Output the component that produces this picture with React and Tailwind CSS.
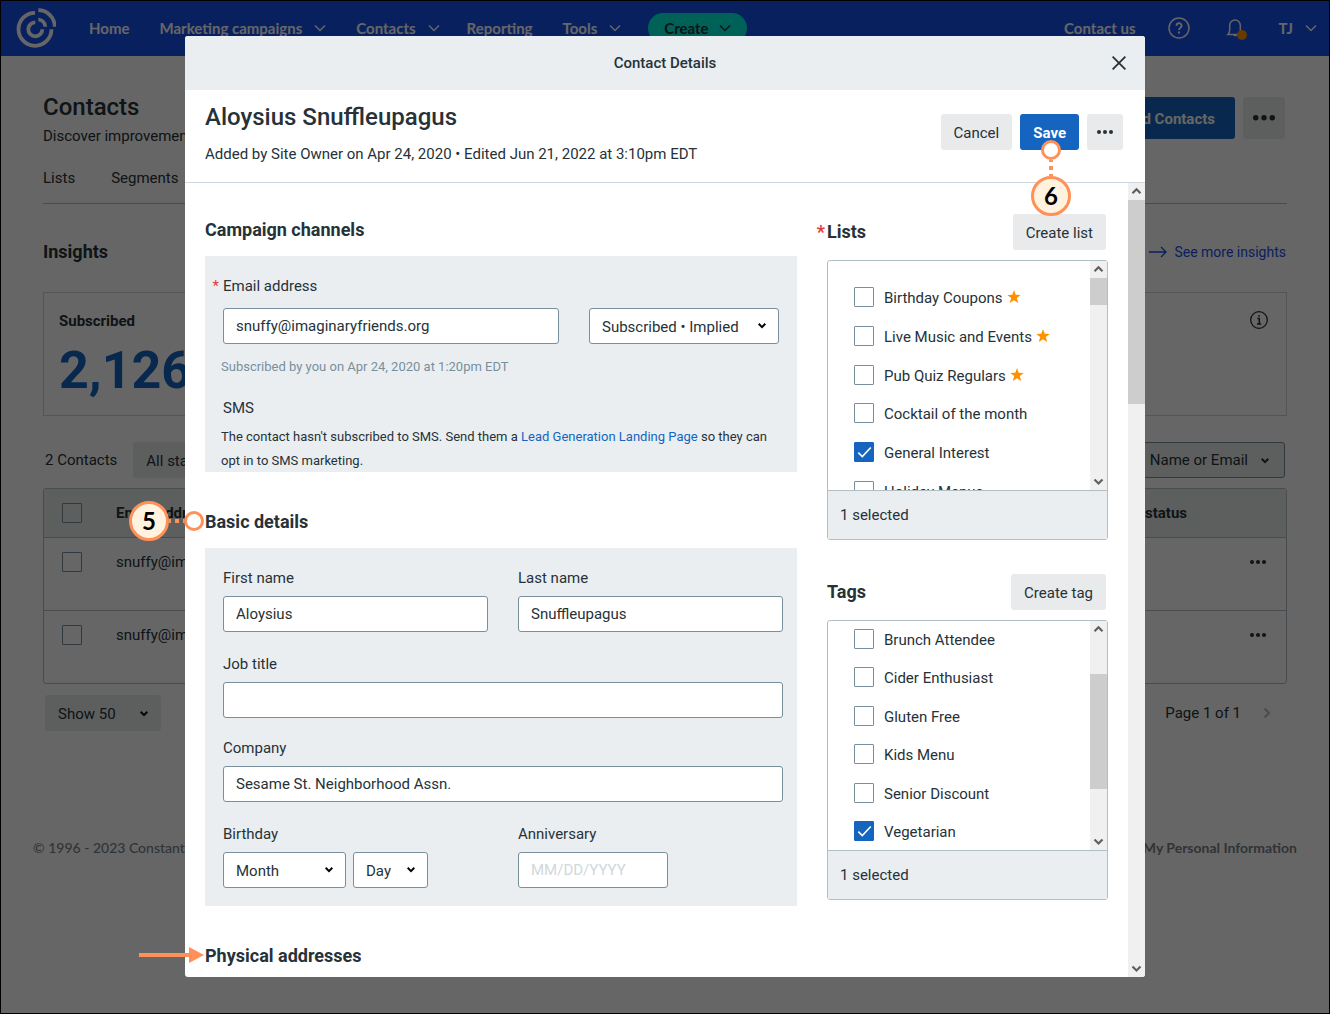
import React, { useState } from 'react';
import { clsx } from 'clsx';

const LISTS = [
  { name: 'Birthday Coupons', starred: true },
  { name: 'Live Music and Events', starred: true },
  { name: 'Pub Quiz Regulars', starred: true },
  { name: 'Cocktail of the month' },
  { name: 'General Interest' },
  { name: 'Holiday Menus' },
];

const TAGS = [
  { name: 'Brunch Attendee' },
  { name: 'Cider Enthusiast' },
  { name: 'Gluten Free' },
  { name: 'Kids Menu' },
  { name: 'Senior Discount' },
  { name: 'Vegetarian' },
];

const ROWS = [1, 2];

const Logo = () => (
  <svg className="h-10 w-10" viewBox="0 0 40 40" fill="none" stroke="currentColor" strokeWidth="3.8">
    <path d="M19 4.8A16.5 16.5 0 1 0 35.5 21.3" />
    <path d="M22.3 2.2A16.5 16.5 0 0 1 38.8 18.7" />
    <path d="M19.3 14.3A7 7 0 1 0 26.3 21.3" />
    <path d="M22.3 11.7A7 7 0 0 1 29.3 18.7" />
  </svg>
);

const NavChevron = () => (
  <svg className="h-3 w-3" viewBox="0 0 12 12" fill="none" stroke="currentColor" strokeWidth="1.5">
    <path d="M1 3.5l5 5 5-5" />
  </svg>
);

const Caret = ({ className }) => (
  <svg className={clsx('h-2 w-2', className)} viewBox="0 0 8 8" fill="none" stroke="currentColor" strokeWidth="2">
    <path d="M0.7 1.8L4 5.1l3.3-3.3" />
  </svg>
);

const Dots = ({ className = 'w-4' }) => (
  <svg className={className} viewBox="0 0 16 4" fill="currentColor">
    <circle cx="2" cy="2" r="2" />
    <circle cx="8" cy="2" r="2" />
    <circle cx="14" cy="2" r="2" />
  </svg>
);

const Star = () => (
  <svg className="h-[14px] w-[14px] -translate-y-px text-[#ff9100]" viewBox="0 0 14 14" fill="currentColor">
    <path d="M7 0l1.700 4.700 5 .2-3.900 3.200 1.400 5L7 10.300l-4.200 2.800 1.400-5L.3 4.900l5-.2z" />
  </svg>
);

const Checkbox = ({ id, checked, onChange, label }) => (
  <span className="relative block h-5 w-5 shrink-0">
    <input
      type="checkbox"
      id={id}
      checked={checked}
      onChange={onChange}
      aria-label={label}
      className="block h-5 w-5 appearance-none rounded-[1px] border border-[#78909c] checked:border-[#1565c0] checked:bg-[#1565c0]"
    />
    {checked && (
      <svg className="pointer-events-none absolute inset-0 h-5 w-5 text-white" viewBox="0 0 20 20" fill="none" stroke="currentColor" strokeWidth="1.6">
        <path d="M4.300 10.700l4 3.800 8.500-9" />
      </svg>
    )}
  </span>
);

const ScrollArrow = ({ up }) => (
  <svg className="h-[17px] w-[17px] shrink-0 text-[#606060]" viewBox="0 0 17 17" fill="none" stroke="currentColor" strokeWidth="2.2">
    <path d={up ? 'M4.500 10.300l4-4 4 4' : 'M4.500 6.500l4 4 4-4'} />
  </svg>
);

// thumb takes the classes for its offset and height
const Scrollbar = ({ thumb }) => (
  <div className="flex w-[17px] shrink-0 flex-col bg-[#f0f0f0]">
    <ScrollArrow up />
    <div className="flex-1">
      <div className={clsx('bg-[#cdcdcd]', thumb)} />
    </div>
    <ScrollArrow />
  </div>
);

const Field = ({ id, label, className, ...props }) => (
  <div>
    <label htmlFor={id} className="mb-2 block leading-5">{label}</label>
    <input
      id={id}
      className={clsx('h-9 rounded-[3px] border border-[#78909c] bg-white px-3 placeholder:text-[#cfd8dc]', className)}
      {...props}
    />
  </div>
);

const Select = ({ label, options, className, id }) => (
  <span className={clsx('relative inline-block', className)}>
    <select
      id={id}
      aria-label={label}
      className="h-9 w-full appearance-none rounded-[3px] border border-[#78909c] bg-white pl-3 pt-[2px]"
    >
      {options.map((option) => (
        <option key={option}>{option}</option>
      ))}
    </select>
    <Caret className="pointer-events-none absolute right-[13px] top-[14px] text-black" />
  </span>
);

const PickerBox = ({ title, required, action, items, initial, listClass, thumb }) => {
  const [selected, setSelected] = useState(initial);

  const toggle = (name) => {
    setSelected(selected.includes(name) ? selected.filter((item) => item !== name) : [...selected, name]);
  };

  return (
    <section>
      <div className="flex items-center justify-between pr-[2px]">
        <h3 className="relative text-lg font-bold">
          {required && <span className="absolute right-full pr-[2px] text-[#e53935]">*</span>}
          {title}
        </h3>
        <button className="h-9 rounded-[3px] bg-[#e8eaec] px-[13px] pt-[2px]">{action}</button>
      </div>
      <div className="mt-[10px] rounded-[3px] border border-[#b0bec5]">
        <div className="flex h-[229px] overflow-hidden">
          <div className="flex-1 pl-[26px]">
            <ul className={clsx('flex flex-col justify-between', listClass)}>
              {items.map((item) => {
                const id = item.name.toLowerCase().replaceAll(' ', '-');
                return (
                  <li key={item.name} className="flex h-5 items-center">
                    <Checkbox id={id} checked={selected.includes(item.name)} onChange={() => toggle(item.name)} />
                    <label htmlFor={id} className="flex items-center gap-1 pl-[10px] pt-[2px] leading-5">
                      {item.name}
                      {item.starred && <Star />}
                    </label>
                  </li>
                );
              })}
            </ul>
          </div>
          <Scrollbar thumb={thumb} />
        </div>
        <div className="h-[49px] border-t border-[#b0bec5] bg-[#eaeef1] px-3 leading-[48px]">
          {selected.length} selected
        </div>
      </div>
    </section>
  );
};

const NavBar = () => (
  <header className="flex h-[55px] items-center justify-between bg-[#1850ed] pb-px pl-[15px] pr-3 font-['Lato',sans-serif] text-[15px] font-bold text-white">
    <nav className="flex items-center">
      <Logo />
      <a href="#" className="ml-[33px]">Home</a>
      <a href="#" className="ml-[30px] flex items-center gap-3">Marketing campaigns <NavChevron /></a>
      <a href="#" className="ml-[30px] flex items-center gap-3">Contacts <NavChevron /></a>
      <a href="#" className="ml-[27px]">Reporting</a>
      <a href="#" className="ml-[30px] flex items-center gap-3">Tools <NavChevron /></a>
      <button className="ml-[27px] flex h-[30px] items-center gap-[10px] rounded-full bg-[#00f2dc] px-4 text-[#263238]">
        Create <NavChevron />
      </button>
    </nav>
    <div className="flex items-center">
      <a href="#">Contact us</a>
      <button aria-label="Help" className="ml-8">
        <svg className="h-[22px] w-[22px]" viewBox="0 0 22 22" fill="none" stroke="currentColor" strokeWidth="1.5">
          <circle cx="11" cy="11" r="10" />
          <path d="M8.500 8.700a2.500 2.500 0 1 1 3.700 2.200c-.8.500-1.200.9-1.200 2.200" strokeWidth="1.800" />
          <path d="M11 14.500v2" strokeWidth="2" />
        </svg>
      </button>
      <button aria-label="Notifications" className="relative ml-9 h-6 w-5">
        <svg className="h-6 w-5" viewBox="0 0 20 24" fill="none" stroke="currentColor" strokeWidth="1.500">
          <path d="M2 18.500c1.300-1.200 1.700-2.700 1.700-5V9.300a5.300 5.300 0 0 1 10.600 0v4.200c0 2.300.4 3.800 1.700 5zM7.500 18.500c.2 1.500 3 1.500 3.200 0" />
        </svg>
        <span className="absolute -right-px bottom-0 h-[10px] w-[10px] rounded-full bg-[#ff9100]" />
      </button>
      <button className="ml-[33px] flex items-center gap-3">TJ <NavChevron /></button>
    </div>
  </header>
);

const ContactsPage = () => (
  <>
    <main className="px-[42px] text-[#263238]">
      <div className="flex items-start justify-between pt-[35px]">
        <div>
          <h1 className="text-2xl font-medium leading-8">Contacts</h1>
          <p className="mt-px leading-6">Discover improvements for your contacts</p>
        </div>
        <div className="mr-[2px] flex gap-2 pt-[6px]">
          <button className="h-[42px] rounded-[3px] bg-[#1565c0] px-5 pt-[2px] font-bold text-white">Add Contacts</button>
          <button aria-label="More" className="flex h-[42px] w-[42px] items-center justify-center rounded-[3px] bg-[#e8edee]">
            <Dots className="w-[22px]" />
          </button>
        </div>
      </div>

      <nav className="flex gap-9 border-b border-[#b0bec5] pb-[13px] pt-[18px] leading-6">
        <a href="#">Lists</a>
        <a href="#">Segments</a>
      </nav>

      <div className="flex items-center justify-between pt-[34px]">
        <h2 className="text-lg font-bold leading-7">Insights</h2>
        <a href="#" className="mr-px flex items-center gap-[7px] text-sm text-[#1850ed]">
          <svg className="h-3 w-[18px]" viewBox="0 0 18 12" fill="none" stroke="currentColor" strokeWidth="1.300">
            <path d="M0 6h17M12 1l5 5-5 5" />
          </svg>
          See more insights
        </a>
      </div>

      <section className="mt-[26px] flex items-start justify-between border border-[#cfd8dc] px-[15px] pb-[14px] pt-[18px]">
        <div>
          <h3 className="font-bold leading-5">Subscribed</h3>
          <p className="mt-[10px] text-[52px] font-bold leading-[60px] text-[#1565c0]">2,126</p>
        </div>
        <svg className="mr-[3px] h-[18px] w-[18px]" viewBox="0 0 18 18" fill="none" stroke="currentColor">
          <circle cx="9" cy="9" r="8.300" strokeWidth="1.300" />
          <path d="M7.300 7.500h2v5.500M7 13h4.200M8.200 5h1.600" strokeWidth="1.500" />
        </svg>
      </section>

      <div className="mt-[26px] flex items-center justify-between px-[2px]">
        <div className="flex items-center gap-4">
          <span>2 Contacts</span>
          <button className="h-9 rounded-[3px] bg-[#e8edee] px-[13px] pt-[2px]">All statuses</button>
        </div>
        <button className="flex h-9 items-center gap-[13px] rounded-[3px] border border-[#78909c] bg-[#e8edee] pl-3 pr-[15px] pt-px">
          <span>Search by</span>
          <span>Name or Email</span>
          <Caret />
        </button>
      </div>

      <div className="mt-[10px] overflow-hidden rounded-[3px] border border-[#b0bec5]">
        <table className="w-full text-left">
          <thead className="bg-[#e8edee]">
            <tr className="h-[48px] border-b border-[#b0bec5]">
              <th className="w-[72px] pl-[18px]"><Checkbox label="Select all contacts" checked={false} onChange={() => {}} /></th>
              <th className="font-bold">Email address</th>
              <th className="text-right font-bold">Email status</th>
              <th className="w-[99px]" aria-label="Actions" />
            </tr>
          </thead>
          <tbody>
            {ROWS.map((row) => (
              <tr key={row} className="h-[73px] border-b border-[#b0bec5] align-top last:border-b-0">
                <td className="pl-[18px] pt-[14px]"><Checkbox label="Select contact" checked={false} onChange={() => {}} /></td>
                <td className="pt-[14px] leading-5">snuffy@imaginaryfriends.org</td>
                <td />
                <td className="pr-5 pt-[14px]">
                  <button aria-label="Contact actions" className="ml-auto flex h-5 items-center"><Dots /></button>
                </td>
              </tr>
            ))}
          </tbody>
        </table>
      </div>

      <div className="mt-[11px] flex items-center justify-between pl-[2px] pr-4">
        <button className="flex h-9 items-center gap-6 rounded-[3px] bg-[#e8edee] px-[13px] pt-[2px]">Show 50 <Caret className="text-black" /></button>
        <div className="flex items-center gap-[22px]">
          Page 1 of 1
          <svg className="h-3 w-2 text-[#b0bec5]" viewBox="0 0 8 12" fill="none" stroke="currentColor" strokeWidth="2">
            <path d="M1.500 1.500L6 6l-4.500 4.500" />
          </svg>
        </div>
      </div>
    </main>

    <footer className="mt-[107px] flex justify-between px-8 font-['Lato',sans-serif] text-sm font-bold leading-5 text-[#78838a]">
      <span className="font-medium">© 1996 - 2023 Constant Contact</span>
      <a href="#">Do Not Sell My Personal Information</a>
    </footer>
  </>
);

const StepBadge = ({ children }) => (
  <span className="flex h-10 w-10 items-center justify-center rounded-full border-[3px] border-[#ff9057] bg-[#fff2df] font-['Lato',sans-serif] text-2xl font-bold text-black">
    {children}
  </span>
);

const StepTarget = () => <span className="h-5 w-5 shrink-0 rounded-full border-[3px] border-[#ff9057] bg-white" />;

const App = () => {
  return (
    <div className="relative min-h-screen border border-black bg-white font-['Roboto',sans-serif] text-[15px]">
      <NavBar />
      <ContactsPage />

      <div className="absolute inset-0 flex justify-center bg-black/60 pb-9 pt-[35px] text-[#263238]">
        <div role="dialog" aria-label="Contact Details" className="relative flex w-full max-w-[960px] flex-col rounded-[3px] bg-white">
          <div className="relative flex h-[54px] shrink-0 items-center justify-center rounded-t-[3px] bg-[#eaeef1]">
            <span className="font-medium">Contact Details</span>
            <button aria-label="Close" className="absolute right-[19px]">
              <svg className="h-[14px] w-[14px]" viewBox="0 0 14 14" fill="none" stroke="currentColor" strokeWidth="1.800">
                <path d="M0.600 0.600l12.800 12.800M13.400 0.600L0.600 13.400" />
              </svg>
            </button>
          </div>

          <div className="flex shrink-0 items-start justify-between border-b border-[#cfd8dc] pb-[18px] pl-5 pr-[22px]">
            <div className="pt-[11px]">
              <h2 className="text-2xl font-medium leading-8">Aloysius Snuffleupagus</h2>
              <p className="mt-[11px] leading-5">Added by Site Owner on Apr 24, 2020 • Edited Jun 21, 2022 at 3:10pm EDT</p>
            </div>
            <div className="flex gap-2 pt-6">
              <button className="h-9 rounded-[3px] bg-[#e8eaec] px-[13px] pt-[2px]">Cancel</button>
              <button className="h-9 rounded-[3px] bg-[#1565c0] px-[13px] pt-[2px] font-bold text-white">Save</button>
              <button aria-label="More actions" className="flex h-9 w-9 items-center justify-center rounded-[3px] bg-[#e8eaec]"><Dots /></button>
            </div>
          </div>

          <div className="flex min-h-0 flex-1 overflow-hidden rounded-b-[3px]">
            <div className="flex flex-1 gap-[30px] px-5">
              <div className="flex-1 pt-[33px]">
                <h3 className="text-lg font-bold leading-7">Campaign channels</h3>
                <section className="mt-3 h-[216px] bg-[#eaeef1] pl-[18px] pr-[18px] pt-5">
                  <div className="flex items-end justify-between">
                    <div className="relative">
                      <span className="absolute right-full pr-1 leading-5 text-[#e53935]">*</span>
                      <label htmlFor="email" className="mb-3 block leading-5">Email address</label>
                      <input id="email" defaultValue="snuffy@imaginaryfriends.org" className="block h-9 w-[336px] rounded-[3px] border border-[#78909c] bg-white px-3" />
                    </div>
                    <Select label="Email permission" options={['Subscribed • Implied']} className="w-[190px]" />
                  </div>
                  <div className="-ml-[2px] mt-[11px] text-[13px] leading-6">
                    <p className="text-[#78909c]">Subscribed by you on Apr 24, 2020 at 1:20pm EDT</p>
                    <h4 className="mt-[17px] pl-[2px] text-[15px]">SMS</h4>
                    <p className="mt-[5px]">
                      The contact hasn't subscribed to SMS. Send them a <a href="#" className="text-[#1565c0]">Lead Generation Landing Page</a> so they can opt in to SMS marketing.
                    </p>
                  </div>
                </section>

                <h3 className="mt-9 text-lg font-bold leading-7">Basic details</h3>
                <section className="mt-3 bg-[#eaeef1] pb-[18px] pl-[18px] pr-[14px] pt-5">
                  <div className="mb-[22px] grid grid-cols-2 gap-[30px]">
                    <Field id="first-name" label="First name" defaultValue="Aloysius" className="block w-full" />
                    <Field id="last-name" label="Last name" defaultValue="Snuffleupagus" className="block w-full" />
                  </div>
                  <Field id="job-title" label="Job title" className="mb-5 block w-full" />
                  <Field id="company" label="Company" defaultValue="Sesame St. Neighborhood Assn." className="mb-[22px] block w-full" />
                  <div className="grid grid-cols-2 gap-[30px]">
                    <div>
                      <label htmlFor="birthday" className="mb-2 block leading-5">Birthday</label>
                      <div className="flex gap-[7px]">
                        <Select id="birthday" options={['Month']} className="w-[123px]" />
                        <Select label="Birthday day" options={['Day']} className="w-[75px]" />
                      </div>
                    </div>
                    <Field id="anniversary" label="Anniversary" placeholder="MM/DD/YYYY" className="block w-[150px]" />
                  </div>
                </section>

                <h3 className="mt-9 text-lg font-bold leading-7">Physical addresses</h3>
              </div>

              <div className="flex w-[281px] flex-col gap-[34px] pt-[31px]">
                <PickerBox
                  title="Lists"
                  required
                  action="Create list"
                  items={LISTS}
                  initial={['General Interest']}
                  listClass="mt-[26px] h-[214px]"
                  thumb="h-[27px]"
                />
                <PickerBox
                  title="Tags"
                  action="Create tag"
                  items={TAGS}
                  initial={['Vegetarian']}
                  listClass="mt-2 h-[212px]"
                  thumb="mt-9 h-[115px]"
                />
              </div>
            </div>
            <Scrollbar thumb="h-[204px]" />
          </div>

          {/* step callouts */}
          <div className="absolute right-[74px] top-[104px] flex flex-col items-center">
            <StepTarget />
            <svg className="h-4 w-1 text-[#ff9057]" viewBox="0 0 4 16" stroke="currentColor" strokeWidth="4">
              <path d="M2 0v16" strokeDasharray="4" strokeDashoffset="2" />
            </svg>
            <StepBadge>6</StepBadge>
          </div>
          <div className="absolute -left-14 top-[465px] flex items-center">
            <StepBadge>5</StepBadge>
            <svg className="h-1 w-[15px] text-[#ff9057]" viewBox="0 0 15 4" stroke="currentColor" strokeWidth="4">
              <path d="M0 2h15" strokeDasharray="4" strokeDashoffset="2" />
            </svg>
            <StepTarget />
          </div>
          <svg className="absolute -left-[46px] top-[911px] h-4 w-[65px] text-[#ff9057]" viewBox="0 0 65 16" fill="currentColor">
            <path d="M0 6h50V0l15 8-15 8v-6H0z" />
          </svg>
        </div>
      </div>
    </div>
  );
};

export default App;
